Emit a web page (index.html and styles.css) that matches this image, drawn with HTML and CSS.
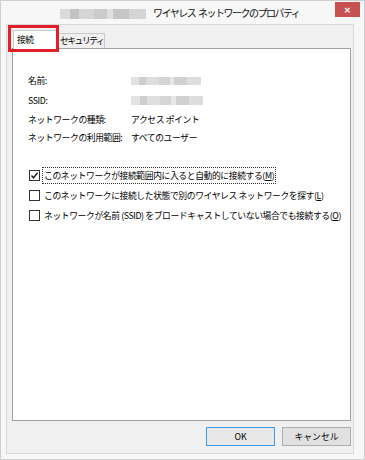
FILE: index.html
```html
<!DOCTYPE html>
<html>

<head>
    <title>ワイヤレス ネットワークのプロパティ</title>
    <link rel="stylesheet" href="styles.css">
</head>

<body>

    <div class="window">
        <!-- Title Bar -->
        <div class="titlebar">
            <div class="blur blur-title"></div>
            <div class="title">ワイヤレス ネットワークのプロパティ</div>
            <div class="close">&#x2715;</div>
        </div>

        <!-- Client Area -->
        <div class="client">
            <div class="tabs">
                <div class="tab active">接続</div>
                <div class="tab">セキュリティ</div>
                <div class="marker"></div>
            </div>

            <div class="panel">
                <div class="info">
                    <div class="label">名前:</div>
                    <div><div class="blur blur-name"></div></div>
                    <div class="label">SSID:</div>
                    <div><div class="blur blur-ssid"></div></div>
                    <div class="label">ネットワークの種類:</div>
                    <div>アクセス ポイント</div>
                    <div class="label">ネットワークの利用範囲:</div>
                    <div>すべてのユーザー</div>
                </div>

                <div class="checks">
                    <div class="check-row">
                        <span class="box checked">
                            <svg width="9" height="9" viewBox="0 0 9 9"><path d="M1.5 4.5 L3.5 6.8 L7.6 1.8" fill="none" stroke="#222" stroke-width="1.4"/></svg>
                        </span>
                        <span class="check-text focus">このネットワークが接続範囲内に入ると自動的に接続する(<u>M</u>)</span>
                    </div>
                    <div class="check-row">
                        <span class="box"></span>
                        <span class="check-text">このネットワークに接続した状態で別のワイヤレス ネットワークを探す(<u>L</u>)</span>
                    </div>
                    <div class="check-row">
                        <span class="box"></span>
                        <span class="check-text">ネットワークが名前 (SSID) をブロードキャストしていない場合でも接続する(<u>O</u>)</span>
                    </div>
                </div>
            </div>

            <div class="buttons">
                <button class="btn default">OK</button>
                <button class="btn">キャンセル</button>
            </div>
        </div>
    </div>

</body>

</html>
```

FILE: styles.css
```css
body {
    margin: 0;
    background-color: #fff;
    font-family: "Noto Sans CJK JP", "Noto Sans", sans-serif;
    font-size: 8.8px;
    color: #000;
}

.window {
    width: 365px;
    height: 460px;
    box-sizing: border-box;
    border: 1px solid #cfcfcf;
    background-color: #f7f7f7;
    display: flex;
    flex-direction: column;
}

.titlebar {
    height: 23px;
    display: flex;
    align-items: flex-start;
    padding-left: 59px;
}

.blur {
    background: linear-gradient(90deg, #d6d6d6 0 12%, #b9b9b9 12% 22%, #d0d0d0 22% 40%, #c3c3c3 40% 55%, #dcdcdc 55% 62%, #bdbdbd 62% 80%, #cfcfcf 80% 100%);
    opacity: 0.85;
}

.blur-title {
    width: 86px;
    height: 10px;
    margin-top: 8px;
}

.title {
    margin-left: 7px;
    margin-top: 5px;
    font-size: 10px;
    line-height: 14px;
    letter-spacing: -1.5px;
    word-spacing: 2px;
    color: #111;
}

.close {
    margin-left: auto;
    margin-right: 4px;
    margin-top: 1px;
    width: 25px;
    height: 15px;
    background-color: #c75050;
    color: #fff;
    font-size: 8px;
    font-weight: bold;
    line-height: 15px;
    text-align: center;
}

.client {
    flex: 1;
    margin: 0 10px 5px 5px;
    border: 1px solid #d9d9d9;
    background-color: #f0f0f0;
    padding: 0 2px 0 5px;
    display: flex;
    flex-direction: column;
}

.tabs {
    position: relative;
    display: flex;
    align-items: flex-end;
    height: 23px;
    padding-left: 1px;
}

.tab {
    height: 14px;
    line-height: 14px;
    padding: 0 1px;
    border: 1px solid #c9c9c9;
    border-bottom: none;
    background-color: #f0f0f0;
    letter-spacing: -1.5px;
}

.tab.active {
    width: 37px;
    height: 18px;
    line-height: 18px;
    padding: 0 3px;
    background-color: #fff;
    margin-bottom: -1px;
    letter-spacing: -0.5px;
    position: relative;
    z-index: 1;
}

.marker {
    position: absolute;
    left: -4px;
    top: 0;
    width: 45px;
    height: 21px;
    border: 3px solid #e3202a;
    z-index: 2;
}

.panel {
    height: 373px;
    box-sizing: border-box;
    background-color: #fff;
    border: 1px solid #a0a0a0;
    padding: 21px 0 0 15px;
}

.info {
    display: grid;
    grid-template-columns: 103px auto;
    grid-template-rows: 21px 19px 18px 18px;
    align-items: center;
    letter-spacing: -0.4px;
}

.blur-name {
    width: 70px;
    height: 8px;
    opacity: 0.7;
}

.blur-ssid {
    width: 72px;
    height: 9px;
    opacity: 0.7;
}

.checks {
    margin-top: 19px;
    padding-left: 1px;
}

.check-row {
    display: flex;
    align-items: center;
    height: 20px;
    letter-spacing: -0.4px;
}

.box {
    width: 9px;
    height: 9px;
    border: 1px solid #333;
    background-color: #fff;
    margin-right: 3px;
    display: flex;
}

.check-text {
    padding: 1px 1px;
    line-height: 13px;
}

.check-text.focus {
    outline: 1px dotted #333;
}

.buttons {
    display: flex;
    justify-content: flex-end;
    gap: 7px;
    padding: 6px 0 0;
}

.btn {
    width: 69px;
    height: 19px;
    font-family: inherit;
    font-size: 8.8px;
    background-color: #e1e1e1;
    border: 1px solid #adadad;
    padding: 0;
    color: #000;
}

.btn.default {
    background-color: #e8e8e8;
    border-color: #3c9be8;
}
```
